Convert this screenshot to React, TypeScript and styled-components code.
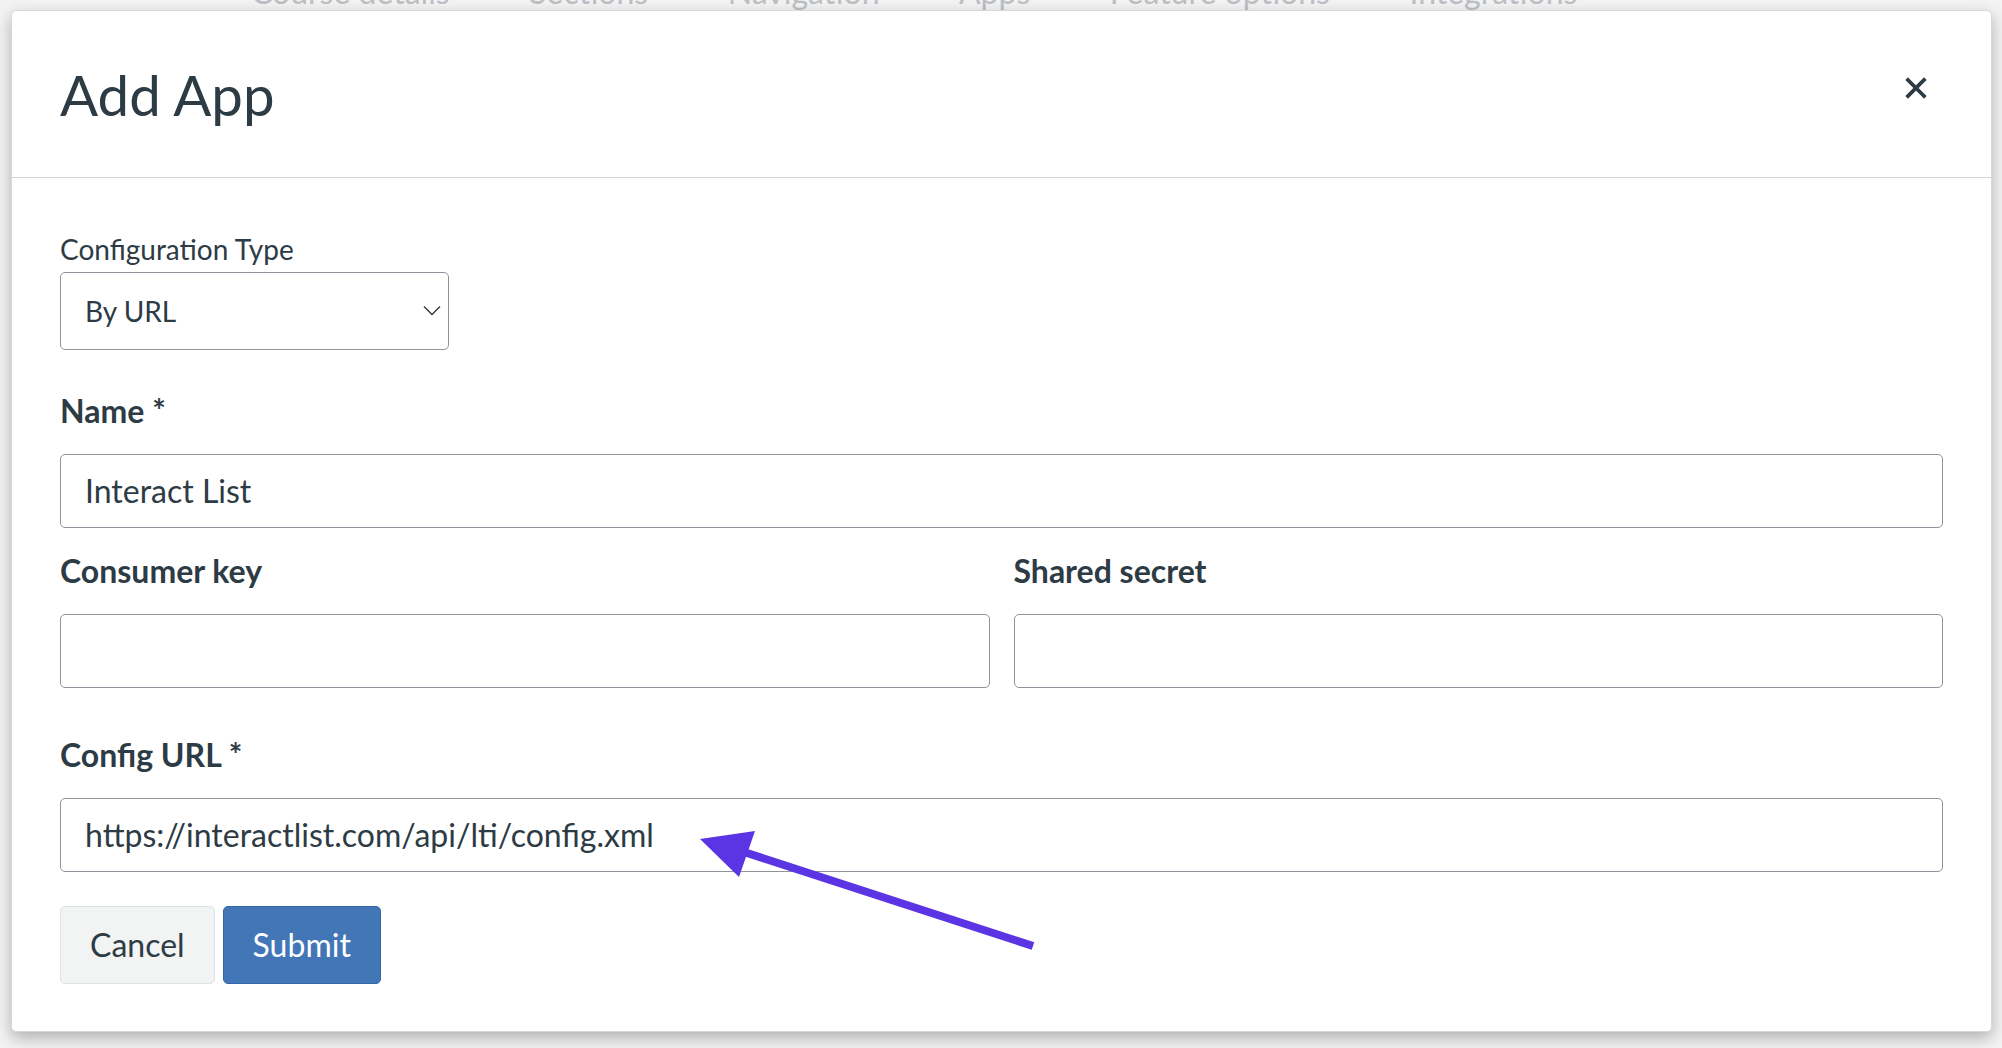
import React from "react";
import styled, { createGlobalStyle } from "styled-components";

const GlobalStyle = createGlobalStyle`
  html, body { margin: 0; padding: 0; }
  body {
    width: 2002px;
    height: 1048px;
    overflow: hidden;
    background: #f3f3f3;
    font-family: Lato, "Liberation Sans", sans-serif;
    color: #2d3b45;
  }
  * { box-sizing: border-box; }
`;

const Page = styled.div`
  position: relative;
  width: 2002px;
  height: 1048px;
  overflow: hidden;
  background: #f3f3f3;
`;

const BackTabs = styled.nav`
  display: flex;
  gap: 79.5px;
  padding-left: 251px;
  margin-top: -24px;
  font-size: 32px;
  line-height: 1;
  color: #bcc0c4;
  white-space: nowrap;
`;

const Overlay = styled.div`
  position: absolute;
  inset: 0;
  display: flex;
  padding: 10px 10px 16px 11px;
`;

const Modal = styled.div`
  flex: 1;
  display: flex;
  flex-direction: column;
  background: #fff;
  border: 1px solid #d8d8d8;
  border-radius: 5px;
  box-shadow: 0 6px 16px rgba(0, 0, 0, 0.28);
`;

const Header = styled.header`
  height: 167px;
  flex: none;
  display: flex;
  align-items: center;
  justify-content: space-between;
  padding: 0 48px;
  border-bottom: 1px solid #d3d6d9;
`;

const Title = styled.h2`
  margin: 0;
  font-size: 56.4px;
  font-weight: 400;
  line-height: 1;
  color: #2d3b45;
`;

const CloseButton = styled.button`
  width: 54px;
  height: 54px;
  margin-bottom: 13px;
  padding: 0;
  border: none;
  background: none;
  display: grid;
  place-items: center;
  color: #2d3b45;
  cursor: pointer;
`;

const Body = styled.div`
  padding: 50px 48px 0;
  display: flex;
  flex-direction: column;
`;

const Field = styled.div<{ $mt?: number }>`
  display: flex;
  flex-direction: column;
  margin-top: ${(p) => p.$mt ?? 0}px;
`;

const Label = styled.label<{ $bold?: boolean; $mb: number }>`
  display: block;
  font-size: ${(p) => (p.$bold ? 32 : 28)}px;
  font-weight: ${(p) => (p.$bold ? 700 : 400)};
  line-height: 1.5;
  margin-bottom: ${(p) => p.$mb}px;
  color: #2d3b45;
`;

const TextInput = styled.input`
  width: 100%;
  height: 74px;
  border: 1px solid #8d949b;
  border-radius: 5px;
  padding: 0 23px 0 24px;
  font-family: inherit;
  font-size: 32px;
  color: #2d3b45;
  background: #fff;
  outline: none;
`;

const SelectWrap = styled.div`
  display: grid;
  width: 389px;
`;

const Select = styled.select`
  grid-area: 1 / 1;
  appearance: none;
  -webkit-appearance: none;
  height: 78px;
  border: 1px solid #8d949b;
  border-radius: 5px;
  padding: 0 40px 0 24px;
  font-family: inherit;
  font-size: 28px;
  color: #2d3b45;
  background: #fff;
  outline: none;
`;

const Chevron = styled.svg`
  grid-area: 1 / 1;
  justify-self: end;
  align-self: center;
  margin-right: 8px;
  pointer-events: none;
`;

const Row = styled.div<{ $mt?: number }>`
  display: grid;
  grid-template-columns: 1fr 1fr;
  column-gap: 24px;
  margin-top: ${(p) => p.$mt ?? 0}px;
`;

const ButtonRow = styled.div`
  display: flex;
  gap: 8px;
  margin-top: 34px;
`;

const Button = styled.button<{ $primary?: boolean }>`
  height: 78px;
  padding: 0 29px;
  border-radius: 5px;
  border: 1px solid ${(p) => (p.$primary ? "#3366a6" : "#dfe2e3")};
  background: ${(p) => (p.$primary ? "#4276b6" : "#f2f3f3")};
  color: ${(p) => (p.$primary ? "#ffffff" : "#2d3b45")};
  font-family: inherit;
  font-size: 32px;
  line-height: 1;
  cursor: pointer;
`;

const ArrowSvg = styled.svg`
  position: absolute;
  left: 690px;
  top: 820px;
  pointer-events: none;
`;

const tabs = ["Course details", "Sections", "Navigation", "Apps", "Feature options", "Integrations"];

export default function App() {
  return (
    <>
      <GlobalStyle />
      <Page>
        <BackTabs>
          {tabs.map((t) => (
            <span key={t}>{t}</span>
          ))}
        </BackTabs>
        <Overlay>
          <Modal role="dialog" aria-label="Add App">
            <Header>
              <Title>Add App</Title>
              <CloseButton aria-label="Close">
                <svg width="22" height="22" viewBox="0 0 22 22">
                  <path d="M3 3 L19 19 M19 3 L3 19" stroke="#2d3b45" strokeWidth="3.8" strokeLinecap="square" fill="none" />
                </svg>
              </CloseButton>
            </Header>
            <Body>
              <Field>
                <Label $mb={1.8}>Configuration Type</Label>
                <SelectWrap>
                  <Select defaultValue="url">
                    <option value="manual">Manual Entry</option>
                    <option value="url">By URL</option>
                    <option value="xml">Paste XML</option>
                  </Select>
                  <Chevron width="18" height="11" viewBox="0 0 18 11">
                    <polyline points="1,1.5 9,9.5 17,1.5" fill="none" stroke="#2d3b45" strokeWidth="1.4" />
                  </Chevron>
                </SelectWrap>
              </Field>
              <Field $mt={37.4}>
                <Label $bold $mb={18.6}>Name *</Label>
                <TextInput defaultValue="Interact List" />
              </Field>
              <Row $mt={19.2}>
                <Field>
                  <Label $bold $mb={18.8}>Consumer key</Label>
                  <TextInput />
                </Field>
                <Field>
                  <Label $bold $mb={18.8}>Shared secret</Label>
                  <TextInput />
                </Field>
              </Row>
              <Field $mt={43.2}>
                <Label $bold $mb={18.8}>Config URL *</Label>
                <TextInput defaultValue="https://interactlist.com/api/lti/config.xml" />
              </Field>
              <ButtonRow>
                <Button>Cancel</Button>
                <Button $primary>Submit</Button>
              </ButtonRow>
            </Body>
          </Modal>
        </Overlay>
        <ArrowSvg width="360" height="140" viewBox="690 820 360 140">
          <line x1="744" y1="852" x2="1033" y2="946" stroke="#5b34e3" strokeWidth="8" />
          <polygon points="700,839 755,831 739,877" fill="#5b34e3" />
        </ArrowSvg>
      </Page>
    </>
  );
}
